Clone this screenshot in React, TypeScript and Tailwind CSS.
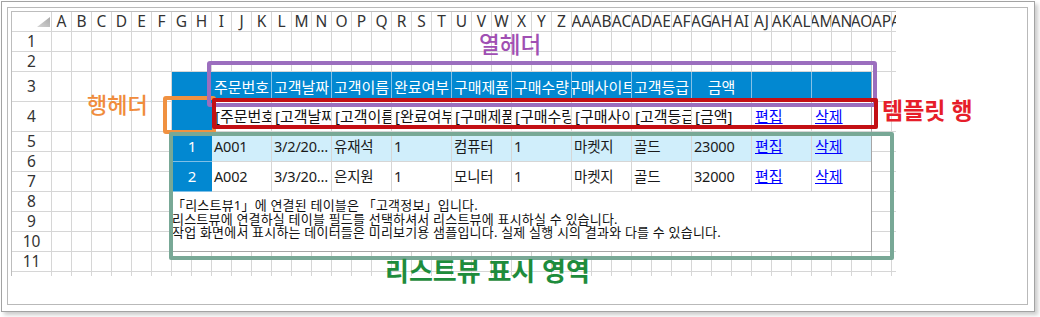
import React from "react";

const colNames: string[] = Array.from({ length: 43 }, (_, i) =>
  i < 26 ? String.fromCharCode(65 + i) : "A" + String.fromCharCode(65 + i - 26)
);
const rowNums: number[] = Array.from({ length: 12 }, (_, i) => i + 1);

const headers = ["주문번호", "고객날짜", "고객이름", "완료여부", "구매제품", "구매수량", "구매사이트", "고객등급", "금액", "", ""];
const template = ["[주문번호]", "[고객날짜]", "[고객이름]", "[완료여부]", "[구매제품]", "[구매수량]", "[구매사이트]", "[고객등급]", "[금액]"];
const rows = [
  ["A001", "3/2/2023", "유재석", "1", "컴퓨터", "1", "마켓지", "골드", "23000"],
  ["A002", "3/3/2023", "은지원", "1", "모니터", "1", "마켓지", "골드", "32000"],
];

function SheetCells() {
  return (
    <div className="[grid-area:1/1] grid grid-cols-[40px_repeat(43,20px)] grid-rows-[20px_20px_20px_30px_30px_repeat(8,20px)]">
      <div className="flex items-end justify-end pr-[1px] pb-[4px] border-r border-b border-[#d6d6d6]">
        <svg width="13" height="10" viewBox="0 0 13 10">
          <defs>
            <linearGradient id="tri" x1="0" y1="1" x2="1" y2="0">
              <stop offset="0" stopColor="#d4d4d4" />
              <stop offset="1" stopColor="#a9a9a9" />
            </linearGradient>
          </defs>
          <polygon points="0,10 13,10 13,0" fill="url(#tri)" />
        </svg>
      </div>
      {colNames.map((c) => (
        <div
          key={c}
          className="flex items-center justify-center overflow-hidden whitespace-nowrap border-r border-b border-[#d6d6d6] text-[15.5px] text-[#333333] leading-none"
        >
          <span>{c}</span>
        </div>
      ))}
      {rowNums.map((r) => (
        <React.Fragment key={r}>
          <div className="flex items-center justify-center border-r border-b border-[#d6d6d6] text-[15.5px] text-[#333333] leading-none">
            {r < 12 ? r : ""}
          </div>
          {colNames.map((c) => (
            <div key={c} className="border-r border-b border-[#d6d6d6]" />
          ))}
        </React.Fragment>
      ))}
    </div>
  );
}

function ListView() {
  return (
    <div className="[grid-column:8/span_35] [grid-row:4/span_8] bg-white border-r border-b border-[#a6a6a6] overflow-hidden">
      <div className="grid grid-cols-[40px_repeat(10,60px)_59px] grid-rows-[30px_30px_30px_30px_59px] text-[15px]">
        {/* header row */}
        <div className="bg-[#0288d1]" />
        {headers.map((h, i) => (
          <div
            key={"h" + i}
            className={
              i < headers.length - 1
                ? "flex items-center justify-center overflow-hidden whitespace-nowrap bg-[#0288d1] text-white border-r border-[#86c1e6]"
                : "flex items-center justify-center overflow-hidden whitespace-nowrap bg-[#0288d1] text-white"
            }
          >
            <span>{h}</span>
          </div>
        ))}
        {/* template row */}
        <div className="bg-[#0288d1]" />
        {template.map((t, i) => (
          <div
            key={"t" + i}
            className="flex items-center pl-[3px] overflow-hidden whitespace-nowrap border-r border-b border-[#d6d6d6] text-[#111111]"
          >
            <span>{t}</span>
          </div>
        ))}
        <div className="flex items-center pl-[3px] border-r border-b border-[#d6d6d6]">
          <span className="text-[#0000ff] underline">편집</span>
        </div>
        <div className="flex items-center pl-[3px] border-b border-[#d6d6d6]">
          <span className="text-[#0000ff] underline">삭제</span>
        </div>
        {/* data rows */}
        {rows.map((row, ri) => (
          <React.Fragment key={"r" + ri}>
            <div className="flex items-center justify-center bg-[#0288d1] text-white border-b border-[#7fbfe6]">
              {ri + 1}
            </div>
            {row.map((v, ci) => (
              <div
                key={"c" + ci}
                className={
                  ri === 0
                    ? "block truncate pl-[2px] leading-[29px] text-[14.5px] tracking-[-0.2px] bg-[#d0eefb] border-r border-b border-[#d6d6d6] text-[#1a1a1a]"
                    : "block truncate pl-[2px] leading-[29px] text-[14.5px] tracking-[-0.2px] bg-white border-r border-b border-[#d6d6d6] text-[#1a1a1a]"
                }
              >
                {v}
              </div>
            ))}
            <div
              className={
                ri === 0
                  ? "flex items-center pl-[3px] bg-[#d0eefb] border-r border-b border-[#d6d6d6]"
                  : "flex items-center pl-[3px] bg-white border-r border-b border-[#d6d6d6]"
              }
            >
              <span className="text-[#0000ff] underline">편집</span>
            </div>
            <div
              className={
                ri === 0
                  ? "flex items-center pl-[3px] bg-[#d0eefb] border-b border-[#d6d6d6]"
                  : "flex items-center pl-[3px] bg-white border-b border-[#d6d6d6]"
              }
            >
              <span className="text-[#0000ff] underline">삭제</span>
            </div>
          </React.Fragment>
        ))}
        {/* info text */}
        <div className="col-span-12 pt-[7px] text-[13px] leading-[13.5px] tracking-[0.2px] text-[#111111] whitespace-nowrap">
          <div>「리스트뷰1」에 연결된 테이블은 「고객정보」입니다.</div>
          <div>리스트뷰에 연결하실 테이블 필드를 선택하셔서 리스트뷰에 표시하실 수 있습니다.</div>
          <div>작업 화면에서 표시하는 데이터들은 미리보기용 샘플입니다. 실제 실행 시의 결과와 다를 수 있습니다.</div>
        </div>
      </div>
    </div>
  );
}

export default function App() {
  return (
    <div className="relative w-[1040px] h-[317px] bg-white overflow-hidden [font-family:'Noto_Sans','Noto_Sans_CJK_KR',sans-serif]">
      <div className="ml-[1px] mt-[1px] w-[1034px] h-[311px] border border-[#a3a3a3] bg-white shadow-[3px_3px_4px_rgba(0,0,0,0.2)] p-[5px]">
        <div className="w-[1021px] h-[298px] border border-[#b9b9b9] p-[3px]">
          <div className="grid w-[885px] h-[265px] overflow-hidden border-l border-t border-[#bdbdbd]">
            <SheetCells />
            <div className="[grid-area:1/1] grid grid-cols-[40px_repeat(43,20px)] grid-rows-[20px_20px_20px_30px_30px_repeat(8,20px)]">
              <ListView />
            </div>
          </div>
        </div>
      </div>

      {/* annotation boxes */}
      <div className="absolute left-[163px] top-[96px] w-[53px] h-[38px] border-4 border-[#f09141] rounded-[3px]" />
      <div className="absolute left-[207px] top-[61px] w-[670px] h-[46px] border-4 border-[#9b6ebe] rounded-[3px]" />
      <div className="absolute left-[212px] top-[98px] w-[666px] h-[31px] border-4 border-[#c30f14] rounded-[2px]" />
      <div className="absolute left-[169px] top-[132px] w-[725px] h-[128px] border-4 border-[#78a896] rounded-[2px]" />

      {/* annotation labels */}
      <div className="absolute left-[479px] top-[34px] text-[22.5px] leading-none text-[#a04fb3] font-medium whitespace-nowrap">열헤더</div>
      <div className="absolute left-[87px] top-[93px] text-[22px] leading-none text-[#f08c3c] font-medium whitespace-nowrap">행헤더</div>
      <div className="absolute left-[882px] top-[99px] text-[23px] leading-none text-[#e61e2a] font-bold whitespace-nowrap">템플릿 행</div>
      <div className="absolute left-[385px] top-[258px] text-[26px] leading-none text-[#1e8c3c] font-bold whitespace-nowrap">리스트뷰 표시 영역</div>
    </div>
  );
}
